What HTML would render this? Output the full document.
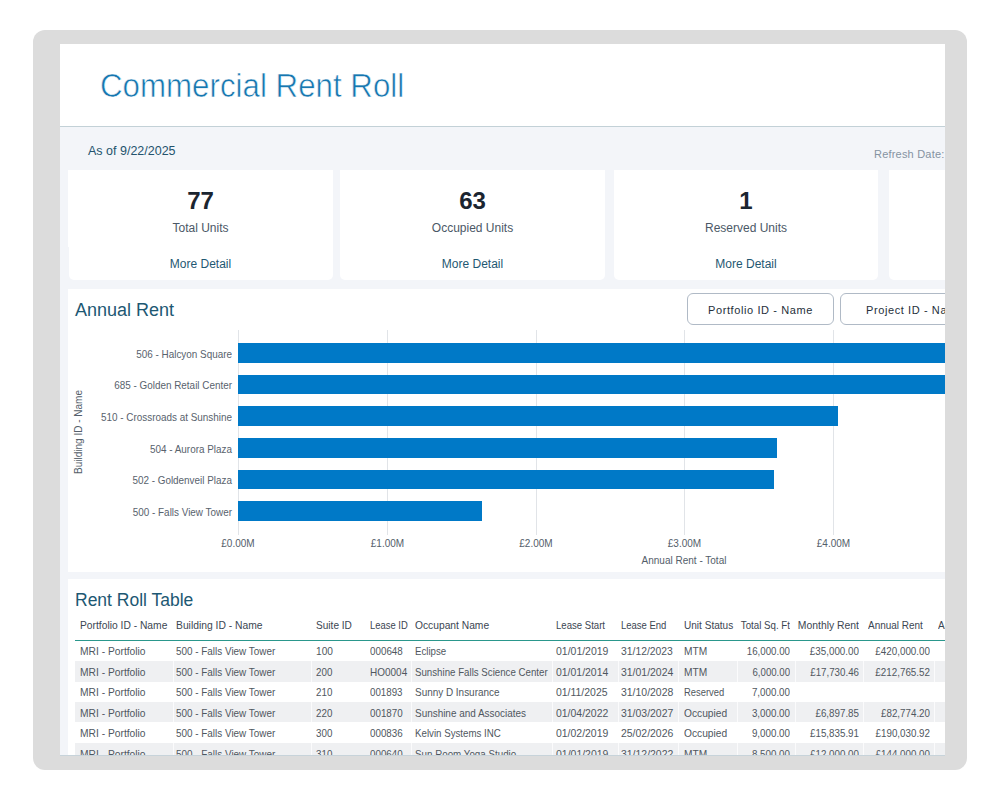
<!DOCTYPE html>
<html><head><meta charset="utf-8">
<style>
html,body{margin:0;padding:0;width:1000px;height:800px;background:#fff;overflow:hidden}
body{font-family:"Liberation Sans",sans-serif;position:relative}
.frame{position:absolute;left:33px;top:30px;width:934px;height:740px;background:#dcdcdc;border-radius:12px}
.clip{position:absolute;left:0;top:0;width:1000px;height:800px;clip-path:inset(44px 55px 44px 60px)}
.bg{position:absolute;left:60px;top:44px;width:885px;height:712px;background:#f3f5f9}
.hdr{position:absolute;left:60px;top:44px;width:885px;height:82px;background:#fff;border-bottom:1px solid #c3d1d7}
.t{position:absolute;line-height:1;white-space:nowrap}
.w{position:absolute;background:#fff}
.card{position:absolute;background:#fff;top:170px;height:77px}
.cardb{position:absolute;background:#fff;top:247px;height:33px;border-radius:0 0 5px 5px}
.num{font-weight:bold;font-size:24px;color:#1b2530;text-align:center}
.lbl{font-size:12px;color:#4b5866;text-align:center}
.more{font-size:12px;color:#1f5872;text-align:center}
.grid{position:absolute;top:330px;height:205px;width:1px;background:#e1e4e8}
.bar{position:absolute;left:238px;height:20px;background:#0079c7}
.yl{font-size:11px;color:#58626d;text-align:right;width:200px;left:31.5px;transform:scaleX(.9);transform-origin:100% 0}
.xl{font-size:10px;color:#545e6a;text-align:center;width:80px}
.btn{position:absolute;top:293px;height:30px;border:1px solid #b0bac6;border-radius:6px;background:#fff}
.th{font-size:11px;color:#3b4652;transform:scaleX(.91);transform-origin:0 0}
.td{font-size:11px;color:#4f5760;transform:scaleX(.9);transform-origin:0 0}
.r{width:200px;text-align:right;transform-origin:100% 0}
.td.n{transform:scaleX(.87)}
.row{position:absolute;left:75px;width:880px;height:20px}
.g{background:#eff0f2}
.sep{position:absolute;top:0;bottom:0;width:1px;background:#fbfbfc}
</style></head><body>
<div class="frame"></div>
<div class="clip">
  <div class="bg"></div>
  <div class="hdr"></div>
  <div class="t" style="left:100px;top:68.4px;font-size:34px;color:#1777b0;-webkit-text-stroke:0.6px #fff;transform:scaleX(.92);transform-origin:0 0">Commercial Rent Roll</div>
  <div class="t" style="left:88px;top:145.4px;font-size:12.5px;color:#24536d">As of 9/22/2025</div>
  <div class="t" style="left:874px;top:148.9px;font-size:11px;letter-spacing:0.2px;color:#8593a2">Refresh Date:</div>

  <!-- cards -->
  <div class="card" style="left:68px;width:265px"></div>
  <div class="cardb" style="left:69px;width:264px"></div>
  <div class="card" style="left:340px;width:265px"></div>
  <div class="cardb" style="left:340px;width:265px"></div>
  <div class="card" style="left:614px;width:264px"></div>
  <div class="cardb" style="left:614px;width:264px"></div>
  <div class="card" style="left:889px;width:265px"></div>
  <div class="cardb" style="left:889px;width:265px"></div>

  <div class="t num" style="left:100.5px;width:200px;top:188.7px">77</div>
  <div class="t lbl" style="left:100.5px;width:200px;top:221.8px">Total Units</div>
  <div class="t more" style="left:100.5px;width:200px;top:257.8px">More Detail</div>

  <div class="t num" style="left:372.5px;width:200px;top:188.7px">63</div>
  <div class="t lbl" style="left:372.5px;width:200px;top:221.8px">Occupied Units</div>
  <div class="t more" style="left:372.5px;width:200px;top:257.8px">More Detail</div>

  <div class="t num" style="left:646px;width:200px;top:188.7px">1</div>
  <div class="t lbl" style="left:646px;width:200px;top:221.8px">Reserved Units</div>
  <div class="t more" style="left:646px;width:200px;top:257.8px">More Detail</div>

  <!-- chart panel -->
  <div class="w" style="left:68px;top:289px;width:900px;height:283px"></div>
  <div class="t" style="left:75px;top:300.8px;font-size:18px;color:#1d5873">Annual Rent</div>
  <div class="btn" style="left:687px;width:145px"></div>
  <div class="btn" style="left:840px;width:145px"></div>
  <div class="t" style="left:708px;top:304.7px;font-size:11px;letter-spacing:0.6px;color:#252f3a">Portfolio ID - Name</div>
  <div class="t" style="left:866px;top:304.7px;font-size:11px;letter-spacing:0.6px;color:#252f3a">Project ID - Name</div>

  <div class="grid" style="left:238px"></div>
  <div class="grid" style="left:387px"></div>
  <div class="grid" style="left:536px"></div>
  <div class="grid" style="left:684px"></div>
  <div class="grid" style="left:833px"></div>

  <div class="bar" style="top:343px;height:20px;width:760px"></div>
  <div class="bar" style="top:375px;height:19px;width:760px"></div>
  <div class="bar" style="top:406px;height:20px;width:600px"></div>
  <div class="bar" style="top:438px;height:20px;width:539px"></div>
  <div class="bar" style="top:470px;height:19px;width:536px"></div>
  <div class="bar" style="top:501px;height:20px;width:244px"></div>

  <div class="t yl" style="top:348.6px">506 - Halcyon Square</div>
  <div class="t yl" style="top:380.3px">685 - Golden Retail Center</div>
  <div class="t yl" style="top:412.0px">510 - Crossroads at Sunshine</div>
  <div class="t yl" style="top:443.7px">504 - Aurora Plaza</div>
  <div class="t yl" style="top:475.4px">502 - Goldenveil Plaza</div>
  <div class="t yl" style="top:507.1px">500 - Falls View Tower</div>

  <div class="t xl" style="left:198px;top:538.5px">£0.00M</div>
  <div class="t xl" style="left:347.5px;top:538.5px">£1.00M</div>
  <div class="t xl" style="left:496px;top:538.5px">£2.00M</div>
  <div class="t xl" style="left:644.5px;top:538.5px">£3.00M</div>
  <div class="t xl" style="left:793.5px;top:538.5px">£4.00M</div>
  <div class="t xl" style="left:634px;width:100px;top:555.5px">Annual Rent - Total</div>
  <div class="t" style="left:28.7px;top:427px;width:100px;text-align:center;font-size:10px;color:#545e6a;transform:rotate(-90deg)">Building ID - Name</div>

  <!-- table panel -->
  <div class="w" style="left:68px;top:579px;width:900px;height:200px"></div>
  <div class="t" style="left:75px;top:592.2px;font-size:17.5px;color:#1d5873">Rent Roll Table</div>
  <!-- TABLE START -->
  <div class="t th" style="left:79.5px;top:619.89px;transform:scaleX(0.934)">Portfolio ID - Name</div>
  <div class="t th" style="left:176px;top:619.89px;transform:scaleX(0.938)">Building ID - Name</div>
  <div class="t th" style="left:315.5px;top:619.89px;transform:scaleX(0.917)">Suite ID</div>
  <div class="t th" style="left:370px;top:619.89px;transform:scaleX(0.856)">Lease ID</div>
  <div class="t th" style="left:415px;top:619.89px;transform:scaleX(0.932)">Occupant Name</div>
  <div class="t th" style="left:556px;top:619.89px;transform:scaleX(0.871)">Lease Start</div>
  <div class="t th" style="left:621px;top:619.89px;transform:scaleX(0.863)">Lease End</div>
  <div class="t th" style="left:683.6px;top:619.89px;transform:scaleX(0.914)">Unit Status</div>
  <div class="t th r" style="left:590px;top:619.89px;transform:scaleX(0.884)">Total Sq. Ft</div>
  <div class="t th r" style="left:659px;top:619.89px;transform:scaleX(0.944)">Monthly Rent</div>
  <div class="t th" style="left:867.5px;top:619.89px;transform:scaleX(0.905)">Annual Rent</div>
  <div class="t th" style="left:938px;top:619.89px">Annual Rent per Sq. Ft</div>
  <div class="w" style="left:75px;top:639.6px;width:880px;height:1.4px;background:#2a978c"></div>
  <div class="t td" style="left:79.5px;top:646.49px;transform:scaleX(0.933)">MRI - Portfolio</div>
  <div class="t td" style="left:176px;top:646.49px;transform:scaleX(0.900)">500 - Falls View Tower</div>
  <div class="t td" style="left:315.5px;top:646.49px;transform:scaleX(0.921)">100</div>
  <div class="t td" style="left:370px;top:646.49px;transform:scaleX(0.893)">000648</div>
  <div class="t td" style="left:415px;top:646.49px;transform:scaleX(0.880)">Eclipse</div>
  <div class="t td" style="left:556px;top:646.49px;transform:scaleX(0.952)">01/01/2019</div>
  <div class="t td" style="left:621px;top:646.49px;transform:scaleX(0.941)">31/12/2023</div>
  <div class="t td" style="left:683.6px;top:646.49px;transform:scaleX(0.926)">MTM</div>
  <div class="t td r n" style="left:590px;top:646.49px;transform:scaleX(0.883)">16,000.00</div>
  <div class="t td r n" style="left:659px;top:646.49px;transform:scaleX(0.894)">£35,000.00</div>
  <div class="t td r n" style="left:730px;top:646.49px;transform:scaleX(0.894)">£420,000.00</div>
  <div class="row g" style="top:661.3px;height:20.4px"><i class="sep" style="left:97.5px"></i><i class="sep" style="left:236px"></i><i class="sep" style="left:336px"></i><i class="sep" style="left:477px"></i><i class="sep" style="left:543px"></i><i class="sep" style="left:603px"></i><i class="sep" style="left:661.5px"></i><i class="sep" style="left:720px"></i><i class="sep" style="left:787.5px"></i><i class="sep" style="left:858.5px"></i></div>
  <div class="t td" style="left:79.5px;top:666.79px;transform:scaleX(0.933)">MRI - Portfolio</div>
  <div class="t td" style="left:176px;top:666.79px;transform:scaleX(0.900)">500 - Falls View Tower</div>
  <div class="t td" style="left:315.5px;top:666.79px;transform:scaleX(0.890)">200</div>
  <div class="t td" style="left:370px;top:666.79px;transform:scaleX(0.908)">HO0004</div>
  <div class="t td" style="left:415px;top:666.79px;transform:scaleX(0.882)">Sunshine Falls Science Center</div>
  <div class="t td" style="left:556px;top:666.79px;transform:scaleX(0.950)">01/01/2014</div>
  <div class="t td" style="left:621px;top:666.79px;transform:scaleX(0.950)">31/01/2024</div>
  <div class="t td" style="left:683.6px;top:666.79px;transform:scaleX(0.926)">MTM</div>
  <div class="t td r n" style="left:590px;top:666.79px;transform:scaleX(0.876)">6,000.00</div>
  <div class="t td r n" style="left:659px;top:666.79px;transform:scaleX(0.886)">£17,730.46</div>
  <div class="t td r n" style="left:730px;top:666.79px;transform:scaleX(0.894)">£212,765.52</div>
  <div class="t td" style="left:79.5px;top:687.19px;transform:scaleX(0.933)">MRI - Portfolio</div>
  <div class="t td" style="left:176px;top:687.19px;transform:scaleX(0.900)">500 - Falls View Tower</div>
  <div class="t td" style="left:315.5px;top:687.19px;transform:scaleX(0.890)">210</div>
  <div class="t td" style="left:370px;top:687.19px;transform:scaleX(0.885)">001893</div>
  <div class="t td" style="left:415px;top:687.19px;transform:scaleX(0.903)">Sunny D Insurance</div>
  <div class="t td" style="left:556px;top:687.19px;transform:scaleX(0.950)">01/11/2025</div>
  <div class="t td" style="left:621px;top:687.19px;transform:scaleX(0.950)">31/10/2028</div>
  <div class="t td" style="left:683.6px;top:687.19px;transform:scaleX(0.854)">Reserved</div>
  <div class="t td r n" style="left:590px;top:687.19px;transform:scaleX(0.890)">7,000.00</div>
  <div class="row g" style="top:702.1px;height:20.4px"><i class="sep" style="left:97.5px"></i><i class="sep" style="left:236px"></i><i class="sep" style="left:336px"></i><i class="sep" style="left:477px"></i><i class="sep" style="left:543px"></i><i class="sep" style="left:603px"></i><i class="sep" style="left:661.5px"></i><i class="sep" style="left:720px"></i><i class="sep" style="left:787.5px"></i><i class="sep" style="left:858.5px"></i></div>
  <div class="t td" style="left:79.5px;top:707.59px;transform:scaleX(0.933)">MRI - Portfolio</div>
  <div class="t td" style="left:176px;top:707.59px;transform:scaleX(0.900)">500 - Falls View Tower</div>
  <div class="t td" style="left:315.5px;top:707.59px;transform:scaleX(0.890)">220</div>
  <div class="t td" style="left:370px;top:707.59px;transform:scaleX(0.890)">001870</div>
  <div class="t td" style="left:415px;top:707.59px;transform:scaleX(0.903)">Sunshine and Associates</div>
  <div class="t td" style="left:556px;top:707.59px;transform:scaleX(0.950)">01/04/2022</div>
  <div class="t td" style="left:621px;top:707.59px;transform:scaleX(0.950)">31/03/2027</div>
  <div class="t td" style="left:683.6px;top:707.59px;transform:scaleX(0.929)">Occupied</div>
  <div class="t td r n" style="left:590px;top:707.59px;transform:scaleX(0.890)">3,000.00</div>
  <div class="t td r n" style="left:659px;top:707.59px;transform:scaleX(0.890)">£6,897.85</div>
  <div class="t td r n" style="left:730px;top:707.59px;transform:scaleX(0.890)">£82,774.20</div>
  <div class="t td" style="left:79.5px;top:727.99px;transform:scaleX(0.933)">MRI - Portfolio</div>
  <div class="t td" style="left:176px;top:727.99px;transform:scaleX(0.900)">500 - Falls View Tower</div>
  <div class="t td" style="left:315.5px;top:727.99px;transform:scaleX(0.890)">300</div>
  <div class="t td" style="left:370px;top:727.99px;transform:scaleX(0.890)">000836</div>
  <div class="t td" style="left:415px;top:727.99px;transform:scaleX(0.883)">Kelvin Systems INC</div>
  <div class="t td" style="left:556px;top:727.99px;transform:scaleX(0.950)">01/02/2019</div>
  <div class="t td" style="left:621px;top:727.99px;transform:scaleX(0.950)">25/02/2026</div>
  <div class="t td" style="left:683.6px;top:727.99px;transform:scaleX(0.929)">Occupied</div>
  <div class="t td r n" style="left:590px;top:727.99px;transform:scaleX(0.890)">9,000.00</div>
  <div class="t td r n" style="left:659px;top:727.99px;transform:scaleX(0.890)">£15,835.91</div>
  <div class="t td r n" style="left:730px;top:727.99px;transform:scaleX(0.890)">£190,030.92</div>
  <div class="row g" style="top:743.2px;height:20.4px"><i class="sep" style="left:97.5px"></i><i class="sep" style="left:236px"></i><i class="sep" style="left:336px"></i><i class="sep" style="left:477px"></i><i class="sep" style="left:543px"></i><i class="sep" style="left:603px"></i><i class="sep" style="left:661.5px"></i><i class="sep" style="left:720px"></i><i class="sep" style="left:787.5px"></i><i class="sep" style="left:858.5px"></i></div>
  <div class="t td" style="left:79.5px;top:749.49px;transform:scaleX(0.933)">MRI - Portfolio</div>
  <div class="t td" style="left:176px;top:749.49px;transform:scaleX(0.900)">500 - Falls View Tower</div>
  <div class="t td" style="left:315.5px;top:749.49px;transform:scaleX(0.890)">310</div>
  <div class="t td" style="left:370px;top:749.49px;transform:scaleX(0.890)">000640</div>
  <div class="t td" style="left:415px;top:749.49px;transform:scaleX(0.890)">Sun Room Yoga Studio</div>
  <div class="t td" style="left:556px;top:749.49px;transform:scaleX(0.952)">01/01/2019</div>
  <div class="t td" style="left:621px;top:749.49px;transform:scaleX(0.950)">31/12/2022</div>
  <div class="t td" style="left:683.6px;top:749.49px;transform:scaleX(0.926)">MTM</div>
  <div class="t td r n" style="left:590px;top:749.49px;transform:scaleX(0.890)">8,500.00</div>
  <div class="t td r n" style="left:659px;top:749.49px;transform:scaleX(0.890)">£12,000.00</div>
  <div class="t td r n" style="left:730px;top:749.49px;transform:scaleX(0.890)">£144,000.00</div>
  <div class="w" style="left:60px;top:755px;width:890px;height:1px;background:#c7d3da"></div>
  <!-- TABLE END -->
</div>
</body></html>
